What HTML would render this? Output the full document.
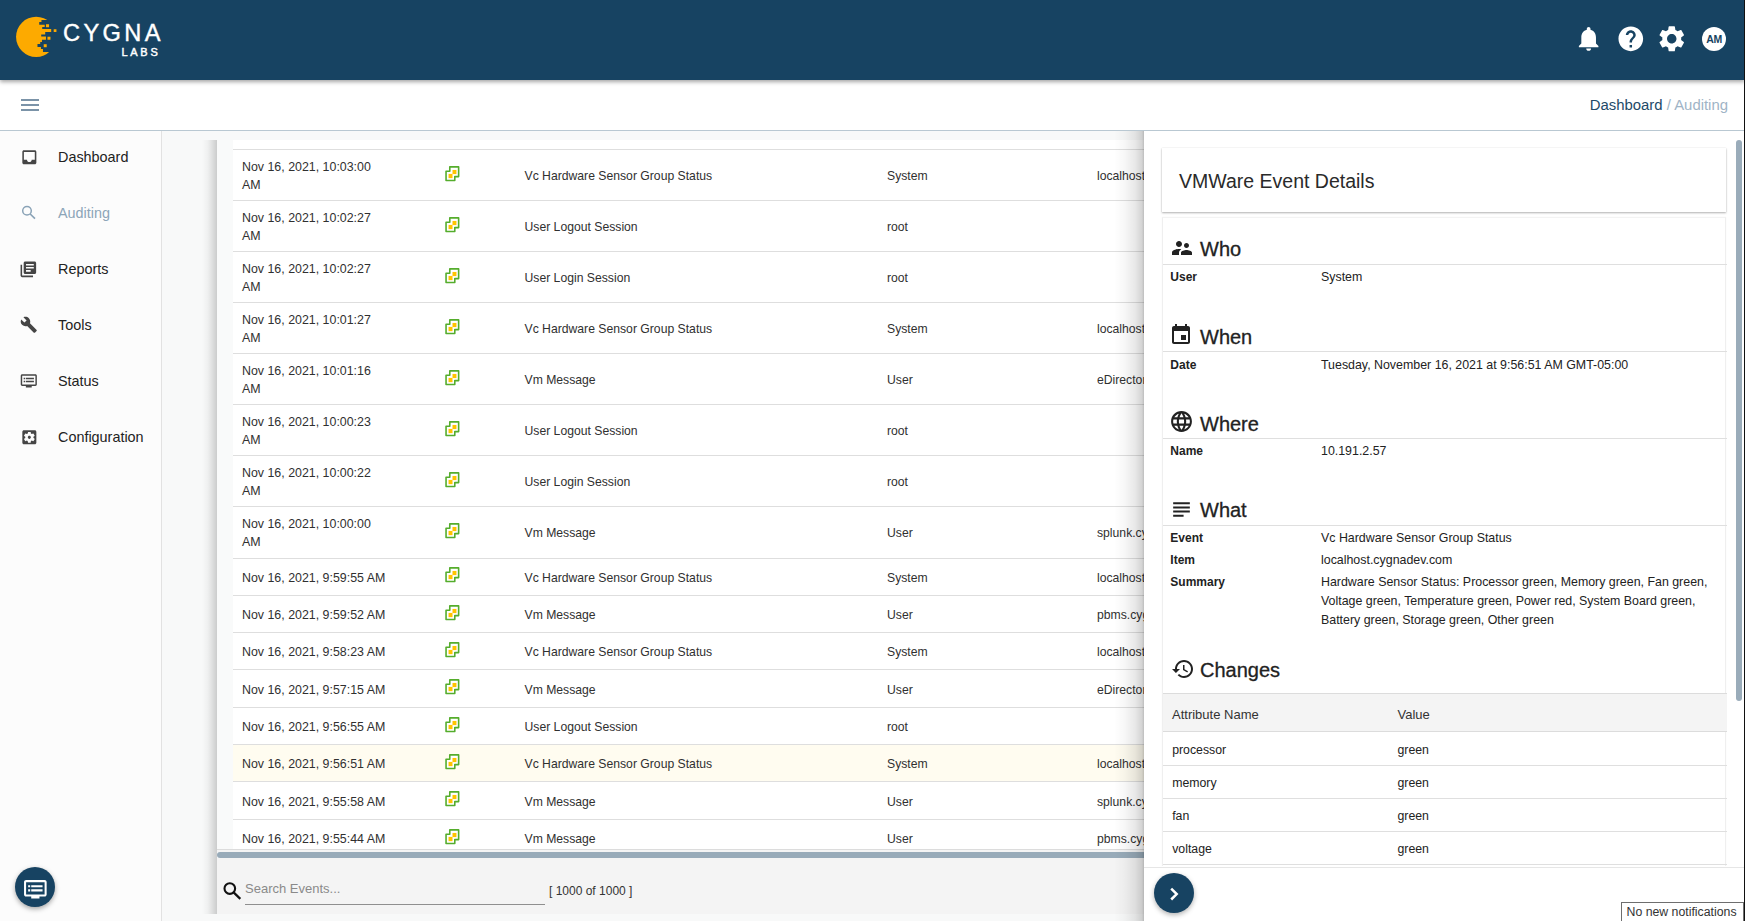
<!DOCTYPE html>
<html><head><meta charset="utf-8">
<style>
*{box-sizing:border-box;margin:0;padding:0}
html,body{width:1745px;height:921px;overflow:hidden;font-family:"Liberation Sans",sans-serif;color:#222;background:#f8f9f9;position:relative}
.abs{position:absolute}
svg{display:block}
#hdr{left:0;top:0;width:1745px;height:80px;background:#174362;box-shadow:0 2px 4px rgba(0,0,0,.35);z-index:5}
#tb{left:0;top:80px;width:1745px;height:51px;background:#fff;border-bottom:1px solid #b9c8d2;z-index:4}
#side{left:0;top:131px;width:162px;height:790px;background:#fcfcfc;border-right:1px solid #e2e2e2}
.nav{position:absolute;left:58px;font-size:14.4px;line-height:14px;color:#222;white-space:nowrap}
.nicon{position:absolute;fill:#454545}
#main{left:162px;top:131px;width:1583px;height:790px;background:#f8f9f9}
#shadow{left:202px;top:140px;width:15px;height:774px;background:linear-gradient(to right,rgba(0,0,0,0),rgba(0,0,0,.04) 40%,rgba(0,0,0,.18))}
#cont{left:217px;top:140px;width:940px;height:774px;background:#f9fafa;overflow:hidden}
#tbl{position:absolute;left:16px;top:0;width:1200px;height:709px;background:#fff;overflow:hidden}
.row{position:absolute;left:0;width:1200px;border-top:1px solid #dedede;font-size:12.2px;line-height:18px;white-space:nowrap;color:#303030}
.row span{position:absolute;top:50%;transform:translateY(-50%);margin-top:1px}
.row .c0{left:9px;font-size:12.4px}
.row .c2{left:291.5px}
.row .c3{left:654px}
.row .c4{left:864px}
.row .ic{position:absolute;left:211.5px;top:calc(50% - 9.4px)}
.row.hl{background:#fffcf0}
#hsb{left:0;top:712px;width:940px;height:6px;background:#98abb9;border-radius:3px}
#foot{left:0;top:718px;width:940px;height:56px;background:#f4f4f4}
#panel{left:1144px;top:131px;width:601px;height:790px;background:#fff;z-index:3;overflow:hidden}
#pshadow{left:1114px;top:131px;width:30px;height:790px;background:linear-gradient(to right,rgba(0,0,0,0),rgba(0,0,0,.03) 35%,rgba(0,0,0,.09) 70%,rgba(0,0,0,.17) 93%,rgba(0,0,0,.26));z-index:3}
#card1{left:18px;top:17px;width:564px;height:64px;background:#fff;box-shadow:0 1px 2px rgba(0,0,0,.3),0 0 1px rgba(0,0,0,.12)}
#card2{left:18px;top:86px;width:564px;height:800px;background:#fff;border:1px solid #efefef;border-top-color:#f3f3f3;box-shadow:0 0 1px rgba(0,0,0,.06)}
.t{position:absolute;white-space:nowrap}
.h{font-size:20px;line-height:20px;font-weight:400;color:#222;-webkit-text-stroke:0.3px #222}
.hl1{position:absolute;left:0;width:564px;height:1px;background:#dfdfdf}
.lab{font-size:12px;line-height:12px;font-weight:700;color:#222}
.val{font-size:12.4px;line-height:12.4px;color:#222}
.sicon{position:absolute;fill:#222}
#vsb{left:592px;top:9px;width:6px;height:561px;background:#9aacba;border-radius:3px}
</style></head><body>
<svg width="0" height="0" style="position:absolute"><defs><symbol id="vmw" viewBox="0 0 14 15"><path d="M4.45 0.85H12.75V9.95H9.15V13.65H0.95V4.95H4.45Z" fill="#fff" stroke="#55ad2c" stroke-width="1.5" stroke-linejoin="round"/><rect x="7" y="3.7" width="3.7" height="3.9" fill="#ffc300"/><rect x="3.3" y="7.4" width="3.7" height="4" fill="#ffc300"/></symbol></defs></svg>

<div id="hdr" class="abs">
  <svg class="abs" style="left:12px;top:14px" width="50" height="46" viewBox="0 0 1001 921">
    <defs><clipPath id="cc"><circle cx="483" cy="457" r="402"/></clipPath></defs>
    <polygon clip-path="url(#cc)" fill="#fdaa00" points="0,0 1000,0 1000,120 590,120 590,160 545,160 545,215 655,215 655,260 605,260 605,300 785,300 785,360 665,360 665,410 585,410 585,450 680,450 680,515 600,515 600,560 565,560 565,600 510,600 510,660 580,660 580,700 620,700 620,760 1000,760 1000,921 0,921"/>
    <rect x="680" y="205" width="62" height="60" fill="#fdaa00"/>
    <rect x="835" y="305" width="55" height="55" fill="#fdaa00"/>
    <rect x="710" y="455" width="60" height="60" fill="#fdaa00"/>
    <rect x="635" y="605" width="60" height="60" fill="#fdaa00"/>
  </svg>
  <div class="t" style="left:63px;top:22.2px;font-size:23.6px;line-height:23.6px;color:#fff;letter-spacing:3.4px;-webkit-text-stroke:0.4px #fff">CYGNA</div>
  <div class="t" style="left:121.5px;top:46.5px;font-size:11px;line-height:11px;color:#fff;letter-spacing:2.7px;font-weight:400;-webkit-text-stroke:0.45px #fff">LABS</div>
  <svg class="abs" style="left:1573.8px;top:23.5px" width="29.3" height="29.3" viewBox="0 0 24 24" fill="#fff"><path d="M12 22c1.1 0 2-.9 2-2h-4c0 1.1.89 2 2 2zm6-6v-5c0-3.07-1.64-5.64-4.5-6.32V4c0-.83-.67-1.5-1.5-1.5s-1.5.67-1.5 1.5v.68C7.63 5.36 6 7.92 6 11v5l-2 2v1h16v-1l-2-2z"/></svg>
  <svg class="abs" style="left:1615.5px;top:23.5px" width="29.6" height="29.6" viewBox="0 0 24 24" fill="#fff"><path d="M12 2C6.48 2 2 6.48 2 12s4.48 10 10 10 10-4.48 10-10S17.52 2 12 2zm1 17h-2v-2h2v2zm2.07-7.75l-.9.92C13.45 12.9 13 13.5 13 15h-2v-.5c0-1.1.45-2.1 1.170-2.83l1.24-1.26c.37-.36.59-.86.59-1.41 0-1.1-.9-2-2-2s-2 .9-2 2H8c0-2.21 1.79-4 4-4s4 1.79 4 4c0 .88-.36 1.68-.93 2.25z"/></svg>
  <svg class="abs" style="left:1656.3px;top:23px" width="31.5" height="31.5" viewBox="0 0 24 24" fill="#fff"><path d="M19.14 12.94c.04-.3.06-.61.06-.94 0-.32-.02-.64-.07-.94l2.030-1.58c.18-.14.23-.41.12-.61l-1.92-3.32c-.12-.22-.37-.29-.59-.22l-2.39.96c-.5-.38-1.030-.7-1.62-.94l-.36-2.54c-.04-.24-.24-.41-.48-.41h-3.84c-.24 0-.43.17-.47.41l-.36 2.54c-.59.24-1.13.57-1.62.94l-2.39-.96c-.22-.08-.47 0-.59.22L2.74 8.87c-.12.21-.08.47.12.61l2.030 1.58c-.05.3-.09.63-.09.94s.02.64.07.94l-2.030 1.58c-.18.14-.23.41-.12.61l1.92 3.32c.12.22.37.29.59.22l2.39-.96c.5.38 1.030.7 1.62.94l.36 2.54c.05.24.24.41.48.41h3.84c.24 0 .44-.17.47-.41l.36-2.54c.59-.24 1.13-.56 1.62-.94l2.39.96c.22.08.47 0 .59-.22l1.92-3.32c.12-.22.07-.47-.12-.61l-2.010-1.58zM12 15.6c-1.98 0-3.6-1.62-3.6-3.6s1.62-3.6 3.6-3.6 3.6 1.62 3.6 3.6-1.62 3.6-3.6 3.6z"/></svg>
  <div class="abs" style="left:1702px;top:27px;width:24px;height:24px;border-radius:50%;background:#fff;color:#174362;font-size:10.5px;font-weight:700;line-height:24px;text-align:center;letter-spacing:-.3px">AM</div>
</div>

<div id="tb" class="abs">
  <div class="abs" style="left:21px;top:19px;width:18px;height:2px;background:#7b93a8"></div>
  <div class="abs" style="left:21px;top:24px;width:18px;height:2px;background:#7b93a8"></div>
  <div class="abs" style="left:21px;top:29px;width:18px;height:2px;background:#7b93a8"></div>
  <div class="t" style="right:17px;top:18.3px;font-size:14.9px;line-height:14.9px"><span style="color:#234a68">Dashboard</span><span style="color:#9fb4c6"> / Auditing</span></div>
</div>

<div id="side" class="abs">
  <svg class="nicon" style="left:19.7px;top:16.7px" width="18.7" height="18.7" viewBox="0 0 24 24"><path d="M19 3H4.99c-1.11 0-1.98.89-1.98 2L3 19c0 1.1.88 2 1.99 2H19c1.1 0 2-.9 2-2V5c0-1.11-.9-2-2-2zm0 12h-4c0 1.66-1.35 3-3 3s-3-1.34-3-3H4.99V5H19v10z"/></svg>
  <div class="nav" style="top:19px">Dashboard</div>
  <svg class="abs" style="left:18px;top:70px" width="22" height="22" viewBox="0 0 22 22"><circle cx="9" cy="9.8" r="4.3" fill="none" stroke="#8aa3b7" stroke-width="1.5"/><path d="M12.2 13L17 17.6" stroke="#8aa3b7" stroke-width="1.7"/></svg>
  <div class="nav" style="top:75px;color:#8ca5b8">Auditing</div>
  <svg class="nicon" style="left:19.4px;top:129.4px" width="18.7" height="18.7" viewBox="0 0 24 24"><path d="M4 6H2v14c0 1.1.9 2 2 2h14v-2H4V6zm16-4H8c-1.1 0-2 .9-2 2v12c0 1.1.9 2 2 2h12c1.1 0 2-.9 2-2V4c0-1.1-.9-2-2-2zm-1 9H9V9h10v2zm-4 4H9v-2h6v2zm4-8H9V5h10v2z"/></svg>
  <div class="nav" style="top:131px">Reports</div>
  <svg class="nicon" style="left:20.1px;top:185px" width="17.6" height="17.6" viewBox="0 0 24 24"><path d="M22.7 19l-9.1-9.1c.9-2.3.4-5-1.5-6.9-2-2-5-2.4-7.4-1.3L9 6 6 9 1.6 4.7C.4 7.1.9 10.1 2.9 12.1c1.9 1.9 4.6 2.4 6.9 1.5l9.1 9.1c.4.4 1 .4 1.4 0l2.3-2.3c.5-.4.5-1.1.1-1.4z"/></svg>
  <div class="nav" style="top:187px">Tools</div>
  <svg class="nicon" style="left:20.3px;top:240.8px" width="17.6" height="17.6" viewBox="0 0 24 24"><path d="M21 3H3c-1.1 0-2 .9-2 2v12c0 1.1.9 2 2 2h5v2h8v-2h5c1.1 0 1.99-.9 1.99-2L23 5c0-1.1-.9-2-2-2zm0 14H3V5h18v12zm-2-9H8v2h11V8zm0 4H8v2h11v-2zM7 8H5v2h2V8zm0 4H5v2h2v-2z"/></svg>
  <div class="nav" style="top:243px">Status</div>
  <svg class="nicon" style="left:19.7px;top:296.7px" width="18.7" height="18.7" viewBox="0 0 24 24"><path d="M12 10c-1.1 0-2 .9-2 2s.9 2 2 2 2-.9 2-2-.9-2-2-2zm7-7H5c-1.11 0-2 .9-2 2v14c0 1.1.89 2 2 2h14c1.11 0 2-.9 2-2V5c0-1.1-.89-2-2-2zm-1.75 9c0 .23-.02.46-.05.68l1.48 1.16c.13.11.17.3.08.45l-1.4 2.42c-.09.15-.27.21-.43.15l-1.74-.7c-.36.28-.76.51-1.18.69l-.26 1.85c-.03.17-.18.3-.35.3h-2.8c-.17 0-.32-.13-.35-.29l-.26-1.85c-.43-.18-.82-.41-1.18-.69l-1.74.7c-.16.06-.34 0-.43-.15l-1.4-2.42c-.09-.15-.05-.34.08-.45l1.48-1.16c-.03-.23-.05-.46-.05-.69 0-.23.02-.46.05-.68l-1.48-1.16c-.13-.11-.17-.3-.08-.45l1.4-2.42c.09-.15.27-.21.43-.15l1.74.7c.36-.28.76-.51 1.18-.69l.26-1.85c.03-.17.18-.3.35-.3h2.8c.17 0 .32.13.35.29l.26 1.85c.43.18.82.41 1.18.69l1.74-.7c.16-.06.34 0 .43.15l1.4 2.42c.09.15.05.34-.08.45l-1.48 1.16c.03.23.05.46.05.69z"/></svg>
  <div class="nav" style="top:299px">Configuration</div>
  <div class="abs" style="left:15px;top:736px;width:40px;height:40px;border-radius:50%;background:#174362;box-shadow:0 2px 5px rgba(0,0,0,.35)">
    <svg class="abs" style="left:7.6px;top:9.7px;fill:#fff" width="24.7" height="24.7" viewBox="0 0 24 24"><path d="M21 3H3c-1.1 0-2 .9-2 2v12c0 1.1.9 2 2 2h5v2h8v-2h5c1.1 0 1.99-.9 1.99-2L23 5c0-1.1-.9-2-2-2zm0 14H3V5h18v12zm-2-9H8v2h11V8zm0 4H8v2h11v-2zM7 8H5v2h2V8zm0 4H5v2h2v-2z"/></svg>
  </div>
</div>

<div id="main" class="abs"></div>
<div id="shadow" class="abs"></div>
<div id="cont" class="abs">
  <div id="tbl">
<div class="row" style="top:9.00px;height:51.00px"><span class="c0">Nov 16, 2021, 10:03:00<br>AM</span><svg class="ic" width="15" height="16"><use href="#vmw"/></svg><span class="c2">Vc Hardware Sensor Group Status</span><span class="c3">System</span><span class="c4">localhost.cygnadev.com</span></div>
<div class="row" style="top:60.00px;height:51.00px"><span class="c0">Nov 16, 2021, 10:02:27<br>AM</span><svg class="ic" width="15" height="16"><use href="#vmw"/></svg><span class="c2">User Logout Session</span><span class="c3">root</span><span class="c4"></span></div>
<div class="row" style="top:111.00px;height:51.00px"><span class="c0">Nov 16, 2021, 10:02:27<br>AM</span><svg class="ic" width="15" height="16"><use href="#vmw"/></svg><span class="c2">User Login Session</span><span class="c3">root</span><span class="c4"></span></div>
<div class="row" style="top:162.00px;height:51.00px"><span class="c0">Nov 16, 2021, 10:01:27<br>AM</span><svg class="ic" width="15" height="16"><use href="#vmw"/></svg><span class="c2">Vc Hardware Sensor Group Status</span><span class="c3">System</span><span class="c4">localhost.cygnadev.com</span></div>
<div class="row" style="top:213.00px;height:51.00px"><span class="c0">Nov 16, 2021, 10:01:16<br>AM</span><svg class="ic" width="15" height="16"><use href="#vmw"/></svg><span class="c2">Vm Message</span><span class="c3">User</span><span class="c4">eDirectory.cygnadev.com</span></div>
<div class="row" style="top:264.00px;height:51.00px"><span class="c0">Nov 16, 2021, 10:00:23<br>AM</span><svg class="ic" width="15" height="16"><use href="#vmw"/></svg><span class="c2">User Logout Session</span><span class="c3">root</span><span class="c4"></span></div>
<div class="row" style="top:315.00px;height:51.00px"><span class="c0">Nov 16, 2021, 10:00:22<br>AM</span><svg class="ic" width="15" height="16"><use href="#vmw"/></svg><span class="c2">User Login Session</span><span class="c3">root</span><span class="c4"></span></div>
<div class="row" style="top:366.00px;height:51.00px"><span class="c0">Nov 16, 2021, 10:00:00<br>AM</span><svg class="ic" width="15" height="16"><use href="#vmw"/></svg><span class="c2">Vm Message</span><span class="c3">User</span><span class="c4">splunk.cygnadev.com</span></div>
<div class="row" style="top:417.50px;height:37.33px"><span class="c0">Nov 16, 2021, 9:59:55 AM</span><svg class="ic" width="15" height="16"><use href="#vmw"/></svg><span class="c2">Vc Hardware Sensor Group Status</span><span class="c3">System</span><span class="c4">localhost.cygnadev.com</span></div>
<div class="row" style="top:454.83px;height:37.33px"><span class="c0">Nov 16, 2021, 9:59:52 AM</span><svg class="ic" width="15" height="16"><use href="#vmw"/></svg><span class="c2">Vm Message</span><span class="c3">User</span><span class="c4">pbms.cygnadev.com</span></div>
<div class="row" style="top:492.16px;height:37.33px"><span class="c0">Nov 16, 2021, 9:58:23 AM</span><svg class="ic" width="15" height="16"><use href="#vmw"/></svg><span class="c2">Vc Hardware Sensor Group Status</span><span class="c3">System</span><span class="c4">localhost.cygnadev.com</span></div>
<div class="row" style="top:529.49px;height:37.33px"><span class="c0">Nov 16, 2021, 9:57:15 AM</span><svg class="ic" width="15" height="16"><use href="#vmw"/></svg><span class="c2">Vm Message</span><span class="c3">User</span><span class="c4">eDirectory.cygnadev.com</span></div>
<div class="row" style="top:566.82px;height:37.33px"><span class="c0">Nov 16, 2021, 9:56:55 AM</span><svg class="ic" width="15" height="16"><use href="#vmw"/></svg><span class="c2">User Logout Session</span><span class="c3">root</span><span class="c4"></span></div>
<div class="row hl" style="top:604.15px;height:37.33px"><span class="c0">Nov 16, 2021, 9:56:51 AM</span><svg class="ic" width="15" height="16"><use href="#vmw"/></svg><span class="c2">Vc Hardware Sensor Group Status</span><span class="c3">System</span><span class="c4">localhost.cygnadev.com</span></div>
<div class="row" style="top:641.48px;height:37.33px"><span class="c0">Nov 16, 2021, 9:55:58 AM</span><svg class="ic" width="15" height="16"><use href="#vmw"/></svg><span class="c2">Vm Message</span><span class="c3">User</span><span class="c4">splunk.cygnadev.com</span></div>
<div class="row" style="top:678.81px;height:37.33px"><span class="c0">Nov 16, 2021, 9:55:44 AM</span><svg class="ic" width="15" height="16"><use href="#vmw"/></svg><span class="c2">Vm Message</span><span class="c3">User</span><span class="c4">pbms.cygnadev.com</span></div>
  </div>
  <div class="abs" style="left:0;top:709px;width:940px;height:1px;background:#dcdcdc"></div>
  <div class="abs" style="left:0;top:710px;width:940px;height:2px;background:#f4f4f4"></div>
  <div id="hsb" class="abs"></div>
  <div id="foot" class="abs">
    <svg class="abs" style="left:4px;top:22px" width="22" height="22" viewBox="0 0 22 22"><circle cx="8.8" cy="8.6" r="5.3" fill="none" stroke="#111" stroke-width="2.1"/><path d="M12.6 12.4L19.3 18.8" stroke="#111" stroke-width="2.3" stroke-linecap="butt"/></svg>
    <div class="t" style="left:28px;top:24px;font-size:13px;line-height:13px;color:#8a8a8a">Search Events...</div>
    <div class="abs" style="left:28px;top:46px;width:300px;height:1px;background:#8f8f8f"></div>
    <div class="t" style="left:332px;top:27px;font-size:12px;line-height:12px;color:#333">[ 1000 of 1000 ]</div>
  </div>
</div>

<div id="pshadow" class="abs"></div>
<div id="panel" class="abs">
  <div class="abs" style="left:0;top:0;width:601px;height:735px;overflow:hidden">
  <div id="card1" class="abs">
    <div class="t" style="left:17px;top:24.3px;font-size:19.5px;line-height:19.5px;color:#2a2a2a">VMWare Event Details</div>
  </div>
  <div id="card2" class="abs">
<svg class="sicon" style="left:6.8px;top:17.5px" width="24" height="24" viewBox="0 0 24 24"><path d="M16.5 12c1.38 0 2.49-1.12 2.49-2.5S17.88 7 16.5 7C15.12 7 14 8.12 14 9.5s1.12 2.5 2.5 2.5zM9 11c1.66 0 2.99-1.34 2.99-3S10.66 5 9 5C7.34 5 6 6.34 6 8s1.34 3 3 3zm7.5 3c-1.83 0-5.5.92-5.5 2.75V19h11v-2.25c0-1.83-3.67-2.75-5.5-2.75zM9 13c-.29 0-.62.02-.97.05C5.71 13.35 2 14.42 2 16.5V19h7v-2.25c0-.85.33-2.34 2.37-3.47C10.5 13.1 9.66 13 9 13z"/></svg>
<div class="t h" style="left:37.0px;top:20.9px">Who</div>
<div class="hl1" style="top:45.9px"></div>
<div class="t lab" style="left:7.3px;top:52.9px">User</div>
<div class="t val" style="left:158.0px;top:52.6px">System</div>
<svg class="sicon" style="left:6.3px;top:105.1px" width="24" height="24" viewBox="0 0 24 24"><path d="M17 12h-5v5h5v-5zM16 1v2H8V1H6v2H5c-1.11 0-1.99.9-1.99 2L3 19c0 1.1.89 2 2 2h14c1.1 0 2-.9 2-2V5c0-1.1-.9-2-2-2h-1V1h-2zm3 18H5V8h14v11z"/></svg>
<div class="t h" style="left:37.0px;top:109.1px">When</div>
<div class="hl1" style="top:133.0px"></div>
<div class="t lab" style="left:7.3px;top:140.9px">Date</div>
<div class="t val" style="left:158.0px;top:140.6px">Tuesday, November 16, 2021 at 9:56:51 AM GMT-05:00</div>
<svg class="sicon" style="left:6.4px;top:190.8px" width="25" height="25" viewBox="0 0 24 24"><path d="M11.99 2C6.47 2 2 6.48 2 12s4.47 10 9.99 10C17.52 22 22 17.52 22 12S17.52 2 11.99 2zm6.93 6h-2.95c-.32-1.25-.78-2.45-1.38-3.56 1.84.63 3.37 1.91 4.33 3.56zM12 4.04c.83 1.2 1.48 2.53 1.91 3.96h-3.82c.43-1.43 1.08-2.76 1.91-3.96zM4.26 14C4.1 13.36 4 12.69 4 12s.1-1.36.26-2h3.38c-.08.66-.14 1.32-.14 2 0 .68.06 1.34.14 2H4.26zm.82 2h2.95c.32 1.25.78 2.45 1.38 3.56-1.84-.63-3.37-1.9-4.33-3.56zm2.95-8H5.08c.96-1.66 2.49-2.93 4.33-3.56C8.81 5.55 8.35 6.75 8.03 8zM12 19.96c-.83-1.2-1.48-2.530-1.91-3.96h3.82c-.43 1.43-1.08 2.76-1.91 3.96zM14.34 14H9.66c-.09-.66-.16-1.32-.16-2 0-.68.07-1.35.16-2h4.68c.09.65.16 1.32.16 2 0 .68-.07 1.34-.16 2zm.25 5.56c.6-1.11 1.06-2.31 1.38-3.56h2.95c-.96 1.65-2.49 2.93-4.33 3.56zM16.36 14c.08-.66.14-1.32.14-2 0-.68-.06-1.34-.14-2h3.38c.16.64.26 1.31.26 2s-.1 1.36-.26 2h-3.38z"/></svg>
<div class="t h" style="left:37.0px;top:196.1px">Where</div>
<div class="hl1" style="top:220.1px"></div>
<div class="t lab" style="left:7.3px;top:227.4px">Name</div>
<div class="t val" style="left:158.0px;top:227.1px">10.191.2.57</div>
<svg class="sicon" style="left:6.4px;top:278.6px" width="25" height="25" viewBox="0 0 24 24"><path d="M14 17H4v2h10v-2zm6-8H4v2h16V9zM4 15h16v-2H4v2zM4 5v2h16V5H4z"/></svg>
<div class="t h" style="left:37.0px;top:281.5px">What</div>
<div class="hl1" style="top:306.7px"></div>
<div class="t lab" style="left:7.3px;top:314.1px">Event</div>
<div class="t val" style="left:158.0px;top:313.8px">Vc Hardware Sensor Group Status</div>
<div class="t lab" style="left:7.3px;top:336.3px">Item</div>
<div class="t val" style="left:158.0px;top:336.0px">localhost.cygnadev.com</div>
<div class="t lab" style="left:7.3px;top:358.1px">Summary</div>
<div class="t" style="left:158.0px;top:354.5px;font-size:12.4px;line-height:19px;color:#222">Hardware Sensor Status: Processor green, Memory green, Fan green,<br>Voltage green, Temperature green, Power red, System Board green,<br>Battery green, Storage green, Other green</div>
<svg class="sicon" style="left:7.9px;top:438.5px" width="24" height="24" viewBox="0 0 24 24"><path d="M13 3c-4.97 0-9 4.03-9 9H1l3.89 3.89.07.14L9 12H6c0-3.87 3.13-7 7-7s7 3.13 7 7-3.13 7-7 7c-1.93 0-3.68-.79-4.94-2.06l-1.42 1.42C8.27 19.99 10.51 21 13 21c4.97 0 9-4.03 9-9s-4.03-9-9-9zm-1 5v5l4.28 2.54.72-1.21-3.5-2.08V8H12z"/></svg>
<div class="t h" style="left:37.0px;top:441.7px">Changes</div>
<div class="hl1" style="top:474.5px"></div>
<div class="abs" style="left:0;top:474.5px;width:564px;height:39.7px;background:#f4f4f4;border-top:1px solid #dcdcdc;border-bottom:1px solid #dcdcdc"></div>
<div class="t" style="left:9.0px;top:489.7px;font-size:13px;line-height:13px;color:#333">Attribute Name</div>
<div class="t" style="left:234.5px;top:489.7px;font-size:13px;line-height:13px;color:#333">Value</div>
<div class="t" style="left:9.2px;top:525.6px;font-size:12.3px;line-height:12.3px;color:#222">processor</div>
<div class="t" style="left:234.5px;top:525.6px;font-size:12.3px;line-height:12.3px;color:#222">green</div>
<div class="hl1" style="top:546.8px"></div>
<div class="t" style="left:9.2px;top:558.7px;font-size:12.3px;line-height:12.3px;color:#222">memory</div>
<div class="t" style="left:234.5px;top:558.7px;font-size:12.3px;line-height:12.3px;color:#222">green</div>
<div class="hl1" style="top:579.9px"></div>
<div class="t" style="left:9.2px;top:591.8px;font-size:12.3px;line-height:12.3px;color:#222">fan</div>
<div class="t" style="left:234.5px;top:591.8px;font-size:12.3px;line-height:12.3px;color:#222">green</div>
<div class="hl1" style="top:613.0px"></div>
<div class="t" style="left:9.2px;top:624.9px;font-size:12.3px;line-height:12.3px;color:#222">voltage</div>
<div class="t" style="left:234.5px;top:624.9px;font-size:12.3px;line-height:12.3px;color:#222">green</div>
<div class="hl1" style="top:646.1px"></div>
  </div>
  </div>
  <div class="abs" style="left:0;top:736px;width:601px;height:1px;background:#e6e6e6"></div>
  <div class="abs" style="left:10px;top:742px;width:40px;height:40px;border-radius:50%;background:#174362;box-shadow:0 2px 5px rgba(0,0,0,.3)">
    <svg class="abs" style="left:0;top:0" width="40" height="40" viewBox="0 0 40 40"><path d="M17.2 15.7L22.7 21.1L17.2 26.5" fill="none" stroke="#fff" stroke-width="2.5"/></svg>
  </div>
  <div id="vsb" class="abs"></div>
</div>
<div class="abs" style="left:1621px;top:902px;width:123px;height:19px;background:#fff;border:1px solid #6e6e6e;border-bottom:0;font-size:12.3px;line-height:19px;padding-left:4.5px;color:#333;z-index:6;white-space:nowrap">No new notifications</div>
<div class="abs" style="left:1744px;top:0;width:1px;height:921px;background:#111;z-index:7"></div>
</body></html>
